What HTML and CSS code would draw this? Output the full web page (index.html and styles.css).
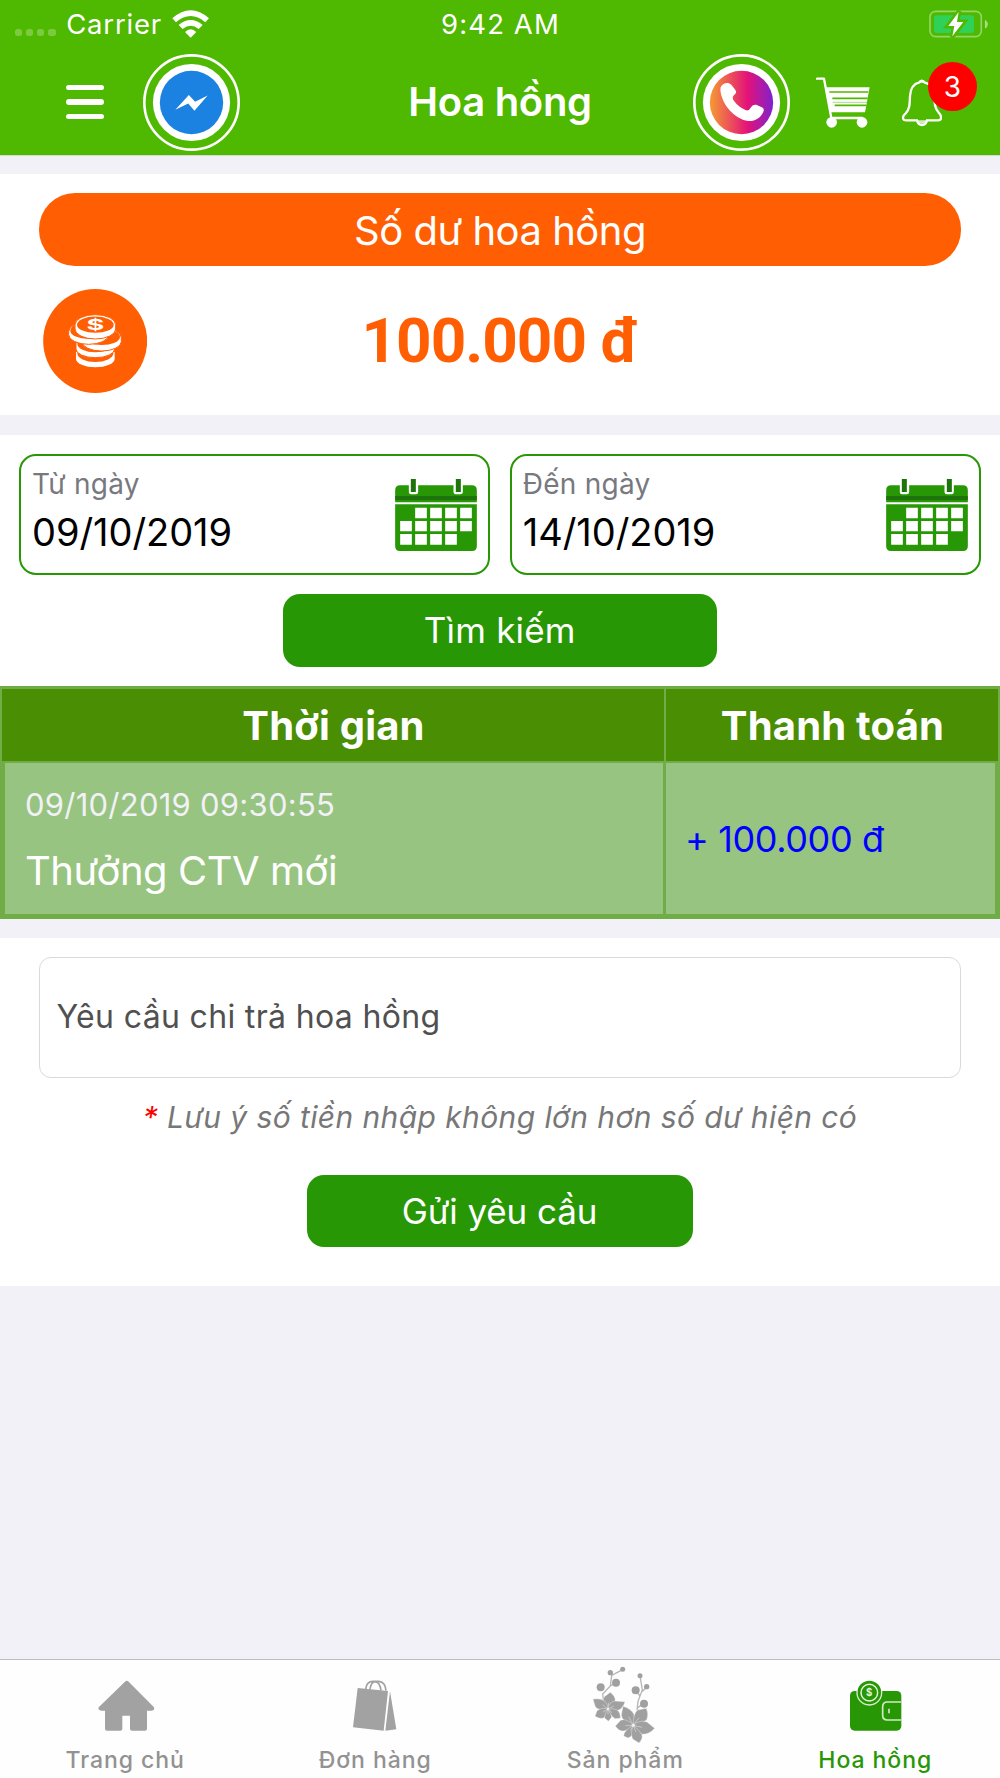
FILE: index.html
```html
<!DOCTYPE html>
<html lang="vi">
<head>
<meta charset="utf-8">
<title>Hoa hồng</title>
<link rel="stylesheet" href="styles.css">
</head>
<body>
<header class="top">
  <div class="status">
    <div class="carrier">
      <span class="dots"><i></i><i></i><i></i><i></i></span>
      <span class="carrier-name">Carrier</span>
      <svg class="wifi" viewBox="517 29 112 83" fill="#fff">
        <path d="M518 54 Q573 6 628 54 L617 66 Q573 28 529 66Z"/>
        <path d="M537 74 Q573 44 609 74 L597 86 Q573 66 549 86Z"/>
        <path d="M556 95 Q573 78 590 95 L573 112Z"/>
      </svg>
    </div>
    <div class="clock">9:42 AM</div>
    <svg class="battery" viewBox="777 28 178 84">
      <rect x="780" y="32" width="154" height="76" rx="17" fill="none" stroke="#fff" stroke-opacity=".4" stroke-width="5"/>
      <path d="M945 57 Q954 62 954 70 Q954 79 945 84Z" fill="#fff" fill-opacity=".5"/>
      <rect x="792" y="44" width="120" height="53" rx="8" fill="#30d158"/>
      <path d="M868 31 L832 77 H852 L846 110 L883 63 H862Z" fill="#fff" stroke="#4fb800" stroke-width="13"/>
      <path d="M866 34 L835 76 H853 L847 107 L880 64 H861Z" fill="#fff"/>
    </svg>
  </div>
  <nav class="nav">
    <div class="nav-side">
      <span class="burger"><i></i><i></i><i></i></span>
      <svg class="round" viewBox="430 159 294 294">
        <circle cx="577" cy="306" r="143" fill="none" stroke="#fff" stroke-width="8"/>
        <circle cx="577" cy="306" r="117" fill="#fff"/>
        <circle cx="577" cy="306" r="96" fill="#1c82e1"/>
        <path d="M528 328 L569 283 L588 304 L626 285 L586 331 L567 309Z" fill="#fff"/>
      </svg>
    </div>
    <h1 class="title">Hoa hồng</h1>
    <div class="nav-side nav-right">
      <svg class="round" viewBox="67 159 294 294">
        <defs><linearGradient id="call"><stop offset="0" stop-color="#f59b33"/><stop offset=".6" stop-color="#e3127a"/><stop offset="1" stop-color="#7f22cc"/></linearGradient></defs>
        <circle cx="214" cy="306" r="143" fill="none" stroke="#fff" stroke-width="8"/>
        <circle cx="214" cy="306" r="117" fill="#fff"/>
        <circle cx="214" cy="306" r="96" fill="url(#call)"/>
        <path fill="#fff" d="M155 254C163 245 176 245 183 252L195 267C199 273 198 277 194 281C186 288 186 294 191 301C200 314 212 323 226 329C233 332 238 329 241 323C246 314 254 311 262 314L277 321C282 324 283 330 279 337C270 354 253 364 234 362C192 356 153 310 150 268C150 262 151 258 155 254Z"/>
      </svg>
      <svg class="cart" viewBox="437 230 162 153">
        <path d="M440 235 H461 L483 353 H575" fill="none" stroke="#fff" stroke-width="7" stroke-linecap="round" stroke-linejoin="round"/>
        <path d="M464 261 H598 L584 336 H480Z" fill="#fff"/>
        <path d="M477 275 H594 M486 294 H592 M493 315 H588" stroke="#4fb800" stroke-width="5"/>
        <path d="M487 306 H590" stroke="#4fb800" stroke-width="1.5"/>
        <circle cx="484" cy="366" r="16" fill="#fff"/><circle cx="575" cy="366" r="16" fill="#fff"/>
      </svg>
      <div class="bell-wrap">
        <svg class="bell" viewBox="697 237 120 144">
          <path d="M749 247a8 8 0 0 1 15 0c20 5 29 18 30 38c1 30 2 42 14 54c6 6 7 10 6 16q-1 6-9 6h-33q-3 14-15 14q-12 0-15-14h-34q-8 0-8-8q0-7 8-13c12-12 12-26 13-52c1-22 9-36 28-41z" fill="none" stroke="#fff" stroke-width="7"/>
          <path d="M747 249a10 10 0 0 1 19 0zM741 361h32q-4 10-16 10t-16-10" fill="#fff" fill-opacity=".75"/>
        </svg>
        <span class="badge">3</span>
      </div>
    </div>
  </nav>
</header>

<section class="balance">
  <div class="pill">Số dư hoa hồng</div>
  <div class="balance-row">
    <svg class="coins" viewBox="127 357 312 312">
      <circle cx="283.500" cy="513" r="156" fill="#ff5e03"/>
      <g fill="#fff">
        <path d="M226 546v20a58 26 0 0 0 116 0v-20z"/><ellipse class="hollow" cx="284" cy="550" rx="54" ry="26"/>
        <path class="edge" d="M226 517v20a58 26 0 0 0 116 0v-20z"/><ellipse class="hollow" cx="284" cy="521" rx="54" ry="26"/>
        <path class="edge" d="M244 503v12a59 28 0 0 0 118 0v-12a59 28 0 0 0-118 0z"/><ellipse class="hollow" cx="303" cy="501" rx="55" ry="24"/>
        <path class="edge" d="M204 485v9a60 29 0 0 0 120 0v-9a60 29 0 0 0-120 0z"/><ellipse class="hollow" cx="264" cy="482" rx="55" ry="25"/>
        <path class="edge" d="M223 464v13a61 30 0 0 0 122 0v-13a61 30 0 0 0-122 0z"/><ellipse class="hollow" cx="284" cy="464" rx="55" ry="24.500"/>
      </g>
      <text class="coin-sign" transform="translate(284 479) scale(1.900 1)" text-anchor="middle" font-size="43" fill="#fff">$</text>
    </svg>
    <strong class="amount">100.000 đ</strong>
  </div>
</section>

<section class="search">
  <div class="dates">
    <div class="date">
      <div><div class="date-label">Từ ngày</div><div class="date-value">09/10/2019</div></div>
      <svg class="calendar" viewBox="1186 117 245 216"><use href="#cal"/></svg>
    </div>
    <div class="date">
      <div><div class="date-label">Đến ngày</div><div class="date-value">14/10/2019</div></div>
      <svg class="calendar" viewBox="1186 117 245 216">
        <g id="cal">
          <path d="M1186 187V151q0-15 15-15H1416q15 0 15 15V187Z M1186 193H1431V319q0 14-14 14H1200q-14 0-14-14Z" fill="#289706"/>
          <path d="M1186 168H1431V180H1186Z" fill="#1d740a"/>
          <path d="M1227 130h28v26q0 7-7 7h-14q-7 0-7-7zM1361 130h28v26q0 7-7 7h-14q-7 0-7-7z" fill="#fff"/>
          <path d="M1233 117h15v39h-15zM1368 117h15v39h-15z" fill="#1d740a"/>
          <path d="M1246 203h35v32h-35zM1291 203h35v32h-35zM1336 203h35v32h-35zM1381 203h35v32h-35zM1201 243h35v31h-35zM1246 243h35v31h-35zM1291 243h35v31h-35zM1336 243h35v31h-35zM1381 243h35v31h-35zM1201 282h35v32h-35zM1246 282h35v32h-35zM1291 282h35v32h-35zM1336 282h35v32h-35z" fill="#fff"/>
        </g>
      </svg>
    </div>
  </div>
  <button class="btn btn-search">Tìm kiếm</button>
</section>

<section class="table">
  <div class="thead"><div class="th">Thời gian</div><div class="th">Thanh toán</div></div>
  <div class="trow">
    <div class="td">
      <div class="when">09/10/2019 09:30:55</div>
      <div class="what">Thưởng CTV mới</div>
    </div>
    <div class="td paid">+ 100.000 đ</div>
  </div>
</section>

<section class="request">
  <div class="field">Yêu cầu chi trả hoa hồng</div>
  <p class="note"><span class="star">*</span> Lưu ý số tiền nhập không lớn hơn số dư hiện có</p>
  <button class="btn btn-send">Gửi yêu cầu</button>
</section>

<footer class="tabs">
  <div class="tab">
    <svg viewBox="240 60 270 252" fill="#a2a2a2"><path d="M375 125q5-5 11 0L462 202q3 10-7 10H441v54q0 6-6 6H396q-6 0-6-6V227H367v39q0 6-6 6H321q-6 0-6-6V212H304q-11-1-8-10Z"/></svg>
    <span>Trang chủ</span>
  </div>
  <div class="tab">
    <svg viewBox="990 60 270 252" fill="#a2a2a2"><path d="M1073 144L1164 153L1151 272L1059 262Z M1170 154L1189 268L1156 272Z"/><path d="M1097 148q2-24 22-24h17q20 1 22 28M1110 149q3-24 16-24q14 2 17 27" fill="none" stroke="#a2a2a2" stroke-width="5"/></svg>
    <span>Đơn hàng</span>
  </div>
  <div class="tab">
    <svg viewBox="240 60 270 252" fill="#a0a0a0">
      <path d="M368 89L335 106L331 138L308 162L311 185M348 128L331 138M420 108L427 150L414 184L411 211M440 141L427 155M407 151L420 168M431 191L413 203" fill="none" stroke="#b5b5b5" stroke-width="4"/>
      <circle cx="368" cy="88" r="7.500"/><circle cx="331" cy="98" r="8"/><circle cx="348" cy="128" r="12"/><circle cx="302" cy="142" r="12"/><circle cx="420" cy="107" r="7.500"/><circle cx="440" cy="140" r="8"/><circle cx="407" cy="151" r="12"/><circle cx="432" cy="191" r="12"/>
      <g stroke="#fefefe" stroke-width="1">
        <path d="M324 207Q304 185 313 170L331 157Q346 170 346 180Q342 195 324 207Z"/>
        <path d="M324 207Q292 214 285 198L279 177Q302 174 314 183Q324 192 324 207Z"/>
        <path d="M324 207Q328 186 344 183L375 185Q369 205 354 211Q338 215 324 207Z"/>
        <path d="M324 207Q304 202 291 212L285 229Q299 238 311 234Q323 222 324 207Z"/>
        <path d="M324 207Q314 222 313 233L325 244L335 232Q333 218 324 207Z"/>
        <path d="M324 207Q332 229 345 236L361 235Q362 218 352 210Q338 204 324 207Z"/>
        <path d="M400 256Q366 246 364 225L369 199Q391 206 401 221Q408 238 400 256Z"/>
        <path d="M400 256Q399 220 413 210L439 205Q447 223 440 240Q426 249 400 256Z"/>
        <path d="M400 256Q419 238 441 246L464 265Q449 283 427 283Q409 275 400 256Z"/>
        <path d="M400 256Q379 233 362 241L346 258Q357 275 372 273Q390 269 400 256Z"/>
        <path d="M400 256Q371 271 371 288L384 294Q398 288 402 276Z"/>
        <path d="M400 256Q390 281 398 297L417 309Q429 297 426 284Q416 269 400 256Z"/>
      </g>
      <path d="M324 207L308 194M324 207L326 188M324 207L341 198M324 207L309 216M324 207V223M324 207L336 218M400 256L386 230M400 256L417 233M400 256L426 262M400 256L376 257M400 256L391 272M400 256L408 276" stroke="#c6c6c6" stroke-width="3"/>
      <circle cx="324" cy="207" r="4" fill="#eee"/><circle cx="400" cy="256" r="5" fill="#eee"/>
    </svg>
    <span>Sản phẩm</span>
  </div>
  <div class="tab active">
    <svg viewBox="990 60 270 252">
      <rect x="1050" y="153" width="154" height="119" rx="14" fill="#289706"/>
      <path d="M1204 186H1162q-14 0-14 14v26q0 14 14 14h42" fill="none" stroke="#cfeac5" stroke-width="5"/>
      <path d="M1167 206v14" stroke="#cfeac5" stroke-width="5"/>
      <circle cx="1108" cy="158" r="36" fill="#289706"/>
      <path d="M1071.500 152A37 37 0 1 0 1144.500 152" fill="none" stroke="#d9efd1" stroke-width="4"/>
      <circle cx="1108" cy="158" r="25" fill="none" stroke="#e4f5de" stroke-width="4.500"/>
      <text class="coin-sign" x="1108" y="168" text-anchor="middle" font-size="29" fill="#e4f5de">$</text>
    </svg>
    <span>Hoa hồng</span>
  </div>
</footer>
</body>
</html>
```
FILE: styles.css
```css
* { box-sizing: border-box; }
body {
  margin: 0;
  width: 1000px;
  height: 1778px;
  display: flex;
  flex-direction: column;
  background: #f2f1f7;
  font-family: Inter, "Liberation Sans", sans-serif;
  white-space: nowrap;
}
svg { display: block; flex: none; }

/* Header */
.top { height: 156px; flex: none; background: #4fb800; border-bottom: 1px solid #d6d9d2; color: #fff; }
.status {
  height: 48px;
  display: grid;
  grid-template-columns: 1fr auto 1fr;
  align-items: center;
  padding: 0 11.500px 0 12.500px;
  font-size: 27.5px;
  line-height: 48px;
}
.carrier { display: flex; align-items: center; }
.dots { display: flex; gap: 4px; margin: 17px 10.5px 0 2px; }
.dots i { width: 7.3px; height: 7.3px; border-radius: 2.5px; background: rgba(255, 255, 255, .25); }
.carrier-name { letter-spacing: .8px; }
.wifi { width: 37.300px; height: 27.700px; margin-left: 10.500px; }
.clock { letter-spacing: 1.1px; }
.battery { width: 59.300px; height: 28px; justify-self: end; }
.nav {
  height: 107px;
  display: grid;
  grid-template-columns: 1fr auto 1fr;
  align-items: center;
  padding: 0 23px;
}
.nav-side { display: flex; align-items: center; }
.nav-right { justify-content: flex-end; }
.burger { display: flex; flex-direction: column; gap: 9px; margin: 1px 0 0 43px; }
.burger i { width: 38px; height: 5.200px; border-radius: 3px; background: #fff; }
.burger + .round { margin-left: 39px; }
.round { width: 97px; height: 97px; margin-top: 1px; }
.title { margin: 0; font-size: 40px; font-weight: 600; line-height: 54px; letter-spacing: -.28px; }
.cart { width: 54px; height: 51px; margin: 1px 0 0 26.300px; }
.bell-wrap { position: relative; width: 75px; height: 48px; margin-left: 32px; }
.bell { width: 40px; height: 48px; margin-top: 1px; }
.badge {
  position: absolute;
  right: 0;
  top: -16px;
  width: 49px;
  height: 49px;
  border-radius: 50%;
  background: #f00;
  font-size: 28px;
  line-height: 50px;
  text-align: center;
}

/* Balance */
.balance { height: 241px; flex: none; margin-top: 18px; padding: 19px 39px 0; background: #fff; }
.pill {
  height: 73px;
  border-radius: 36px;
  background: #ff5e03;
  color: #fff;
  font-size: 40px;
  line-height: 75px;
  letter-spacing: -.5px;
  text-align: center;
}
.balance-row {
  display: grid;
  grid-template-columns: 104px 1fr 104px;
  align-items: center;
  margin-top: 23px;
  padding: 0 3.500px;
}
.coins { width: 104px; height: 104px; }
.coins .hollow { fill: #ff5e03; }
.coins .edge { stroke: #ff5e03; stroke-width: 3; }
.coin-sign { font-family: Inter, sans-serif; font-weight: 700; }
.amount {
  color: #ff5e03;
  font: 700 62px/104px Roboto, sans-serif;
  letter-spacing: -.98px;
  text-align: center;
}

/* Search */
.search { height: 251px; flex: none; margin-top: 20px; padding: 19px 19.500px 0 19px; background: #fff; }
.dates { display: grid; grid-template-columns: 1fr 1fr; gap: 20px; }
.date {
  height: 121px;
  display: flex;
  justify-content: space-between;
  border: 2px solid #289706;
  border-radius: 17px;
  padding: 10px 11px 0;
}
.date-label { color: #78787f; font-size: 28px; line-height: 36px; letter-spacing: .25px; }
.date-value { margin-top: 7px; color: #000; font-size: 38px; line-height: 46px; letter-spacing: -.05px; }
.calendar { width: 82px; height: 72px; margin-top: 13px; }
.btn {
  display: block;
  height: 73px;
  margin: 0 auto;
  padding: 0;
  border: 0;
  border-radius: 17px;
  background: #289706;
  color: #fff;
  font: 400 35px/73px Inter, sans-serif;
}
.btn-search { width: 434px; margin-top: 19px; letter-spacing: .19px; }

/* Commission table */
.table { height: 233px; flex: none; padding-top: 3px; background: #70ad47; }
.thead { display: grid; grid-template-columns: 662px 1fr; gap: 2px; padding: 0 2px; }
.th {
  height: 72px;
  padding-left: 1px;
  background: #4a8e04;
  color: #fff;
  font-size: 40px;
  font-weight: 700;
  line-height: 73px;
  letter-spacing: .2px;
  text-align: center;
}
.trow { display: grid; grid-template-columns: 658px 1fr; gap: 3px; padding: 2px 5px 0; }
.td { height: 151px; padding: 22px 20px 0; background: #97c480; }
.when { color: #f2f1f7; font-size: 31px; line-height: 40px; letter-spacing: .25px; }
.what { margin-top: 21px; color: #fff; font-size: 40px; line-height: 50px; letter-spacing: -.46px; }
.paid { padding: 0 19px; color: #00f; font-size: 36px; line-height: 153px; letter-spacing: -.38px; }

/* Payout request */
.request { height: 348px; flex: none; margin-top: 19px; padding: 19px 39px 0; background: #fff; }
.field {
  height: 121px;
  border: 1px solid #d9d9d9;
  border-radius: 12px;
  padding-left: 16.500px;
  color: #505050;
  font-size: 32px;
  line-height: 118px;
  letter-spacing: .34px;
}
.note {
  margin: 19px 0 0;
  color: #777;
  font-size: 30px;
  font-style: italic;
  line-height: 40px;
  letter-spacing: .4px;
  text-align: center;
}
.star { color: #f00; }
.btn-send { width: 386px; height: 72px; margin-top: 38px; padding-right: 1px; letter-spacing: -.1px; }

/* Tab bar */
.tabs {
  height: 119px;
  margin-top: auto;
  display: grid;
  grid-template-columns: repeat(4, 1fr);
  border-top: 1px solid #bdbcc0;
  background: #fefefe;
}
.tab {
  display: flex;
  flex-direction: column;
  align-items: center;
  color: #929292;
  font-size: 23px;
  font-weight: 500;
  line-height: 28px;
  letter-spacing: .95px;
}
.tab svg { width: 90px; height: 84px; }
.tab span { margin: 1.5px 0 0 .5px; }
.active { color: #289706; }
```
